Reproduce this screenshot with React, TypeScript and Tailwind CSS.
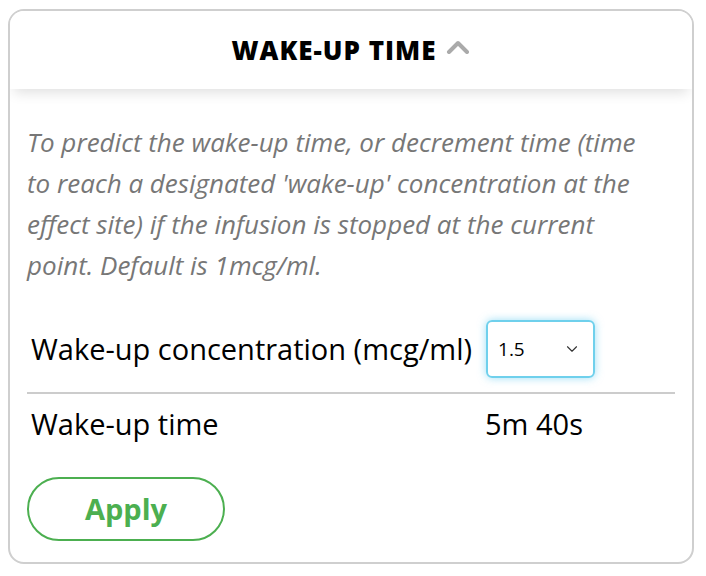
import React from 'react';
import { ChevronDown } from 'lucide-react';

const App: React.FC = () => {
  return (
    <div className="w-[706px] h-[576px] bg-white pt-[9px] pl-2" style={{ fontFamily: '"Open Sans", "Noto Sans", sans-serif' }}>
      <div className="w-[686px] h-[555px] border-2 border-[#cfcfcf] rounded-[16px] overflow-hidden flex flex-col">
        <div className="h-[78px] flex items-center justify-center shadow-[0_8px_12px_-4px_rgba(0,0,0,0.12)] relative z-10 bg-white">
          <span className="text-[26px] font-extrabold tracking-[1px] text-black">WAKE-UP TIME</span>
          <svg className="ml-[10px] mt-[-6px]" width="24" height="14" viewBox="0 0 24 14">
            <path d="M3 12 L12 3 L21 12" fill="none" stroke="#aaaaaa" strokeWidth="4" strokeLinecap="round" strokeLinejoin="round" />
          </svg>
        </div>
        <div className="px-[17px] pt-[33px]">
          <p className="italic text-[#777777] text-[26px] leading-[41px] w-[616px]">
            To predict the wake-up time, or decrement time (time to reach a designated 'wake-up' concentration at the effect site) if the infusion is stopped at the current point. Default is 1mcg/ml.
          </p>
          <div className="mt-[34px] flex items-center h-[58px] pl-[4px]">
            <span className="text-[29px] text-black">Wake-up concentration (mcg/ml)</span>
            <div className="ml-[14px] w-[109px] h-[58px] border-2 border-[#6fd0ec] rounded-[6px] shadow-[0_0_8px_rgba(90,200,240,0.6)] flex items-center justify-between pl-[10px] pr-[12px]">
              <span className="text-[19px] text-black">1.5</span>
              <ChevronDown className="w-[18px] h-[18px] text-[#333]" strokeWidth={1.5} />
            </div>
          </div>
          <div className="mt-[14px] border-t-2 border-[#cccccc]" />
          <div className="flex items-center h-[60px] pl-[4px]">
            <span className="text-[29px] text-black w-[454px]">Wake-up time</span>
            <span className="text-[29px] text-black">5m 40s</span>
          </div>
          <button className="mt-[23px] w-[198px] h-[64px] rounded-full border-2 border-[#4caf50] text-[#4caf50] text-[29px] font-bold flex items-center justify-center">
            Apply
          </button>
        </div>
      </div>
    </div>
  );
};

export default App;
